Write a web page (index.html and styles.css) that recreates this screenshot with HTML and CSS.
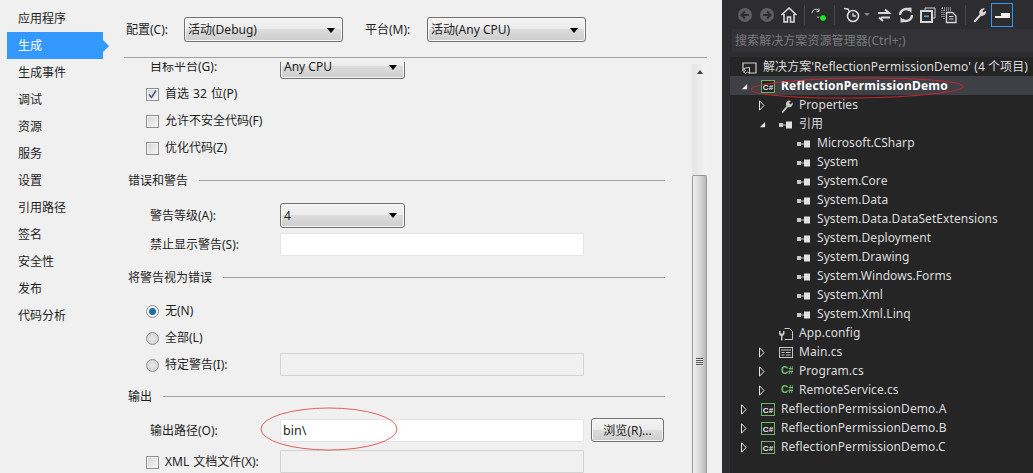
FILE: index.html
```html
<!DOCTYPE html>
<html lang="zh">
<head>
<meta charset="utf-8">
<title>ReflectionPermissionDemo</title>
<link rel="stylesheet" href="styles.css">
</head>
<body>
<svg class="defs" width="0" height="0" aria-hidden="true">
  <symbol id="refs" viewBox="0 0 14 8"><rect x="0" y="2" width="4" height="4" fill="#c8c8c8"/><rect x="4" y="3.500" width="3" height="1" fill="#c8c8c8"/><rect x="7" y="0.500" width="6" height="7" fill="#e0e0e0"/></symbol>
  <symbol id="proj" viewBox="0 0 14 14"><rect x=".5" y=".5" width="13" height="12" fill="#252526" stroke="#6fb36f"/><text x="7" y="9.500" text-anchor="middle" class="cs-white">C#</text></symbol>
  <symbol id="open" viewBox="0 0 6 11"><path d="M.5 .8 L5 5.500 L.5 10.200 Z" fill="none" stroke="#e4e4e4"/></symbol>
  <symbol id="down" viewBox="0 0 8 8"><path d="M7 1 V7 H1 Z" fill="#f0f0f0"/></symbol>
</svg>
<div class="app">
  <nav class="nav">
    <a class="nav-item">应用程序</a>
    <a class="nav-item is-active">生成</a>
    <a class="nav-item">生成事件</a>
    <a class="nav-item">调试</a>
    <a class="nav-item">资源</a>
    <a class="nav-item">服务</a>
    <a class="nav-item">设置</a>
    <a class="nav-item">引用路径</a>
    <a class="nav-item">签名</a>
    <a class="nav-item">安全性</a>
    <a class="nav-item">发布</a>
    <a class="nav-item">代码分析</a>
  </nav>
  <main class="main">
    <header class="config">
      <span class="config-label">配置(C):</span>
      <div class="select select-config">活动(Debug)</div>
      <span class="config-label config-label-2">平台(M):</span>
      <div class="select select-config">活动(Any CPU)</div>
    </header>
    <div class="scroller">
      <div class="form">
        <div class="row row-field row-clip"><span class="label">目标平台(G):</span><div class="select select-short">Any CPU</div></div>
        <div class="row row-check"><span class="check"><svg viewBox="0 0 9 9" width="9" height="9"><path d="M1 4.500 L3.500 7.500 L8 .5" fill="none" stroke="#4a5a9a" stroke-width="1.600"/></svg></span>首选 32 位(P)</div>
        <div class="row row-check"><span class="check"></span>允许不安全代码(F)</div>
        <div class="row row-check"><span class="check"></span>优化代码(Z)</div>

        <div class="section section-a"><span>错误和警告</span></div>
        <div class="row row-field row-32"><span class="label">警告等级(A):</span><div class="select select-short">4</div></div>
        <div class="row row-field row-26"><span class="label">禁止显示警告(S):</span><div class="input"></div></div>

        <div class="section section-b"><span>将警告视为错误</span></div>
        <div class="row row-check"><span class="radio is-on"></span>无(N)</div>
        <div class="row row-check"><span class="radio"></span>全部(L)</div>
        <div class="row row-check"><span class="radio"></span><span class="label-radio">特定警告(I):</span><div class="input input-low"></div></div>

        <div class="section section-c"><span>输出</span></div>
        <div class="row row-field row-32"><span class="label">输出路径(O):</span><div class="input input-on">bin\</div><button class="button">浏览(R)...</button></div>
        <div class="row row-check row-30"><span class="check"></span><span class="label-xml">XML 文档文件(X):</span><div class="input input-low"></div></div>
      </div>
      <div class="scrollbar">
        <span class="scroll-up"></span>
        <div class="thumb"><span class="grip"></span></div>
      </div>
    </div>
    <svg class="ring ring-path" width="140" height="46" viewBox="0 0 140 46"><ellipse cx="70" cy="23" rx="68" ry="21" fill="none" stroke="#e0605e" stroke-width="1"/></svg>
  </main>
  <aside class="explorer">
    <div class="toolbar">
      <svg class="tb" width="18" height="18" viewBox="0 0 18 18"><circle cx="9" cy="9" r="7" fill="#5f5f62"/><path d="M13 9H6M9 5.500 5.500 9 9 12.500" fill="none" stroke="#2d2d30" stroke-width="2"/></svg>
      <svg class="tb" width="18" height="18" viewBox="0 0 18 18"><circle cx="9" cy="9" r="7" fill="#5f5f62"/><path d="M5 9H12M9 5.500 12.500 9 9 12.500" fill="none" stroke="#2d2d30" stroke-width="2"/></svg>
      <svg class="tb" width="18" height="18" viewBox="0 0 18 18"><path d="M1.500 9 9 2l7.500 7M4 8v8h3.500v-5h3v5H14V8" fill="none" stroke="#e0e0e0" stroke-width="1.500"/></svg>
      <span class="tb-sep"></span>
      <svg class="tb" width="18" height="18" viewBox="0 0 18 18"><path d="M2 7a4 4 0 0 1 7-2.500M12 8.500a4 4 0 0 1-5 2.500" fill="none" stroke="#c8c8c8"/><path d="M9 2.500v3H6.500" fill="none" stroke="#c8c8c8"/><circle cx="13" cy="12" r="3.500" fill="#22e822" stroke="#111"/></svg>
      <span class="tb-sep tb-sep-wide"></span>
      <svg class="tb" width="18" height="18" viewBox="0 0 18 18"><path d="M1 2.500l4 .5 1.500 3" fill="none" stroke="#d8d8d8" stroke-width="1.400"/><circle cx="10" cy="10" r="5.500" fill="none" stroke="#d8d8d8" stroke-width="1.600"/><path d="M10 7v3h3" fill="none" stroke="#d8d8d8" stroke-width="1.300"/></svg>
      <span class="tb-caret"></span>
      <svg class="tb tb-after-caret" width="18" height="18" viewBox="0 0 18 18"><path d="M3 7h9M10 3.500l4 3.500h-3M15 11.500H6M8 15l-4-3.500" fill="none" stroke="#d8d8d8" stroke-width="2"/></svg>
      <svg class="tb" width="18" height="18" viewBox="0 0 18 18"><path d="M3 9a6 6 0 0 1 9.500-4.800M15 9a6 6 0 0 1-9.500 4.800" fill="none" stroke="#d8d8d8" stroke-width="2.400"/><path d="M9 2l5.500-.5V7zM9 16l-5.500.5V11z" fill="#d8d8d8"/></svg>
      <svg class="tb" width="18" height="18" viewBox="0 0 18 18"><path d="M6 4V2h10v10h-2" fill="none" stroke="#d8d8d8"/><rect x="2" y="5" width="11" height="11" fill="none" stroke="#d8d8d8" stroke-width="2"/><rect x="5" y="9.500" width="5" height="1.500" fill="#5aa7e0"/></svg>
      <svg class="tb" width="18" height="18" viewBox="0 0 18 18"><path d="M1 2h9M1 2v9M3 4h8M3 4v9" fill="none" stroke="#d8d8d8" stroke-dasharray="1 1"/><path d="M5.500 6.500h6l3.500 3.500v6.500h-9.500z" fill="none" stroke="#d8d8d8" stroke-width="1.300"/><path d="M8 10.500h4.500M8 13h4.500" stroke="#d8d8d8"/></svg>
      <span class="tb-sep"></span>
      <svg class="tb" width="18" height="18" viewBox="0 0 18 18"><path d="M2.500 15 8.500 8.500a4.500 4.500 0 0 1 5.500-6L11.500 5l1 1.500L15 4.500A4.500 4.500 0 0 1 10 10L4 16.500z" fill="#d8d8d8"/></svg>
      <div class="pin"><span class="pin-head"></span></div>
    </div>
    <div class="search">搜索解决方案资源管理器(Ctrl+;)</div>
    <div class="tree">
      <div class="node node-solution">
        <svg class="ico" width="15" height="14" viewBox="0 0 15 14"><path d="M1 10V2h13v10H8" fill="none" stroke="#d0d0d0" stroke-width="1.200"/><path d="M7.500 6.500v6l-2-1.500-2 1.500L1.500 11l2-1.500-2-1.500 2-1z" fill="none" stroke="#d0d0d0"/></svg>
        <span>解决方案'ReflectionPermissionDemo' (4 个项目)</span>
      </div>
      <div class="node is-selected">
        <span class="tw"><svg width="7" height="7"><use href="#down"/></svg></span>
        <svg class="ico ico-proj"><use href="#proj"/></svg><b>ReflectionPermissionDemo</b>
      </div>
      <div class="node lvl1">
        <span class="tw"><svg width="6" height="11"><use href="#open"/></svg></span>
        <svg class="ico ico-lvl" width="14" height="14" viewBox="0 0 14 14"><path d="M2.500 13 7.500 7a3.500 3.500 0 0 1 4.500-5L10 4l1.500 1.500L13.500 3.500A3.500 3.500 0 0 1 9 8L4 14z" fill="#c8c8c8"/></svg><span>Properties</span>
      </div>
      <div class="node lvl1">
        <span class="tw"><svg width="7" height="7"><use href="#down"/></svg></span>
        <svg class="ico ico-lvl" width="14" height="8"><use href="#refs"/></svg><span>引用</span>
      </div>
      <div class="node lvl2"><svg class="ico" width="14" height="8"><use href="#refs"/></svg><span>Microsoft.CSharp</span></div>
      <div class="node lvl2"><svg class="ico" width="14" height="8"><use href="#refs"/></svg><span>System</span></div>
      <div class="node lvl2"><svg class="ico" width="14" height="8"><use href="#refs"/></svg><span>System.Core</span></div>
      <div class="node lvl2"><svg class="ico" width="14" height="8"><use href="#refs"/></svg><span>System.Data</span></div>
      <div class="node lvl2"><svg class="ico" width="14" height="8"><use href="#refs"/></svg><span>System.Data.DataSetExtensions</span></div>
      <div class="node lvl2"><svg class="ico" width="14" height="8"><use href="#refs"/></svg><span>System.Deployment</span></div>
      <div class="node lvl2"><svg class="ico" width="14" height="8"><use href="#refs"/></svg><span>System.Drawing</span></div>
      <div class="node lvl2"><svg class="ico" width="14" height="8"><use href="#refs"/></svg><span>System.Windows.Forms</span></div>
      <div class="node lvl2"><svg class="ico" width="14" height="8"><use href="#refs"/></svg><span>System.Xml</span></div>
      <div class="node lvl2"><svg class="ico" width="14" height="8"><use href="#refs"/></svg><span>System.Xml.Linq</span></div>
      <div class="node lvl1">
        <span class="tw"></span>
        <svg class="ico ico-lvl" width="14" height="14" viewBox="0 0 14 14"><path d="M5.500 1.500h5l3 3v8h-8" fill="none" stroke="#c8c8c8"/><path d="M0 4v2.500a2.500 2.500 0 0 0 2 2.500v4.500h1.500V9a2.500 2.500 0 0 0 2-2.500V4L4 4v2.500H1.500V4z" fill="#c8c8c8"/></svg><span>App.config</span>
      </div>
      <div class="node lvl1">
        <span class="tw"><svg width="6" height="11"><use href="#open"/></svg></span>
        <svg class="ico ico-lvl" width="14" height="12" viewBox="0 0 14 12"><rect x=".5" y=".5" width="13" height="10" fill="none" stroke="#c8c8c8"/><path d="M2 3h10" stroke="#c8c8c8"/><path d="M2.500 5h3v1h-3zM7 5h4.500v1H7zM2.500 7.500h3v1h-3zM7 7.500h4.500v1H7z" fill="#c8c8c8"/></svg><span>Main.cs</span>
      </div>
      <div class="node lvl1">
        <span class="tw"><svg width="6" height="11"><use href="#open"/></svg></span>
        <svg class="ico ico-lvl" width="14" height="14" viewBox="0 0 14 14"><text x="2" y="9" class="cs-green">C#</text></svg><span>Program.cs</span>
      </div>
      <div class="node lvl1">
        <span class="tw"><svg width="6" height="11"><use href="#open"/></svg></span>
        <svg class="ico ico-lvl" width="14" height="14" viewBox="0 0 14 14"><text x="2" y="9" class="cs-green">C#</text></svg><span>RemoteService.cs</span>
      </div>
      <div class="node">
        <span class="tw"><svg width="6" height="11"><use href="#open"/></svg></span>
        <svg class="ico ico-proj"><use href="#proj"/></svg><span>ReflectionPermissionDemo.A</span>
      </div>
      <div class="node">
        <span class="tw"><svg width="6" height="11"><use href="#open"/></svg></span>
        <svg class="ico ico-proj"><use href="#proj"/></svg><span>ReflectionPermissionDemo.B</span>
      </div>
      <div class="node">
        <span class="tw"><svg width="6" height="11"><use href="#open"/></svg></span>
        <svg class="ico ico-proj"><use href="#proj"/></svg><span>ReflectionPermissionDemo.C</span>
      </div>
    </div>
    <svg class="ring ring-project" width="218" height="26" viewBox="0 0 218 26"><ellipse cx="109" cy="13" rx="106" ry="10" fill="none" stroke="#c8262a" stroke-width="1" transform="rotate(-.8 109 13)"/></svg>
  </aside>
</div>
</body>
</html>
```
FILE: styles.css
```css
* { box-sizing: border-box; }
html, body { margin: 0; height: 100%; overflow: hidden; }
body {
  font: 12px/1.2 "Noto Sans", "Noto Sans CJK SC", sans-serif;
  color: #1e1e1e;
  background: #f0f0f0;
}
.defs { position: absolute; }
.app { display: flex; height: 473px; }

/* left navigation */
.nav {
  width: 112px;
  flex: none;
  padding: 5px 9px 0 7px;
  display: flex;
  flex-direction: column;
}
.nav-item {
  height: 27px;
  padding: 2px 0 0 11px;
  display: flex;
  align-items: center;
  position: relative;
}
.nav-item.is-active { background: #3399ff; color: #fff; }
.nav-item.is-active::after {
  content: "";
  position: absolute;
  left: 100%;
  top: 8px;
  border: 6px solid transparent;
  border-left-color: #3399ff;
}

/* properties page */
.main {
  width: 610px;
  flex: none;
  display: flex;
  flex-direction: column;
  padding-left: 2px;
  position: relative;
}
.config {
  height: 58px;
  width: 583px;
  flex: none;
  margin-left: 10px;
  padding: 17px 0 15px 2px;
  display: flex;
  align-items: center;
  border-bottom: 1px solid #a0a0a0;
}
.config-label { width: 58px; flex: none; padding-top: 2px; }
.config-label-2 { width: 62px; margin-left: 22px; }

.select {
  border: 1px solid #707070;
  border-radius: 3px;
  padding: 2px 0 0 3px;
  display: flex;
  align-items: center;
  position: relative;
  background: linear-gradient(#f3f3f3 0%, #ececec 48%, #dcdcdc 50%, #cdcdcd 100%);
  box-shadow: inset 0 0 0 1px #f8f8f8;
}
.select::after {
  content: "";
  position: absolute;
  right: 7px;
  top: 50%;
  margin-top: -2px;
  border: 4px solid transparent;
  border-bottom-width: 0;
  border-top: 5px solid #000;
}
.select-config { width: 159px; height: 25px; }
.select-short { width: 125px; height: 25px; }

.scroller {
  flex: 1;
  min-height: 0;
  width: 583px;
  margin: 4px 0 0 10px;
  display: flex;
  overflow: hidden;
}
.form { flex: 1; margin-top: -9px; padding-left: 4px; min-width: 0; }

.row { display: flex; align-items: center; height: 27px; }
.row-field { padding-left: 22px; }
.row-check { padding: 2px 0 0 18px; word-spacing: 1px; }
.row-32 { height: 32px; }
.row-26 { height: 26px; }
.row-30 { height: 30px; }
.label { width: 130px; flex: none; padding-top: 2px; }
.label-radio { width: 115px; flex: none; }
.label-xml { width: 115px; flex: none; }

.check {
  width: 13px;
  height: 13px;
  flex: none;
  margin-right: 6px;
  border: 1px solid #8e8f8f;
  display: flex;
  align-items: center;
  justify-content: center;
  background: linear-gradient(135deg, #d5d5d5, #f6f6f6);
  box-shadow: inset 0 0 0 1px #f4f4f4;
}
.radio {
  width: 13px;
  height: 13px;
  flex: none;
  margin-right: 6px;
  border: 1px solid #8e8f8f;
  border-radius: 50%;
  background: radial-gradient(circle, #e8e8e8, #cfcfcf);
}
.radio.is-on { background: radial-gradient(circle, #1c6ea8 0 3px, #f0f0f0 4px); }

.section {
  display: flex;
  align-items: center;
  gap: 11px;
  padding-right: 27px;
}
.section span { padding-top: 2px; }
.section::after {
  content: "";
  flex: 1;
  height: 1px;
  background: #a0a0a0;
}
.section-a { height: 38px; }
.section-b { height: 40px; }
.section-c { height: 36px; }

.input {
  width: 304px;
  height: 23px;
  flex: none;
  border: 1px solid #d3d3d3;
  border-radius: 1px;
  background: #f0f0f0;
  padding: 1px 0 0 2px;
  display: flex;
  align-items: center;
  font-size: 12.500px;
}
.input-low { margin-top: -2px; }
.row-26 .input, .input-on { background: #fff; border-color: #e2e3e4; }
.button {
  width: 73px;
  height: 24px;
  flex: none;
  margin-left: 7px;
  padding: 2px 0 0;
  border: 1px solid #707070;
  border-radius: 3px;
  font: inherit;
  color: inherit;
  background: linear-gradient(#f3f3f3 0%, #ececec 48%, #dcdcdc 50%, #cdcdcd 100%);
  box-shadow: inset 0 0 0 1px #f8f8f8;
}

.scrollbar {
  width: 15px;
  flex: none;
  margin-top: 2px;
  display: flex;
  flex-direction: column;
  background: linear-gradient(90deg, #e4e4e4, #f4f4f4);
}
.scroll-up {
  align-self: center;
  margin-top: 6px;
  border: 3.500px solid transparent;
  border-top-width: 0;
  border-bottom: 4px solid #404040;
}
.thumb {
  flex: 1;
  margin-top: 101px;
  border: 1px solid #979797;
  border-bottom: 0;
  border-radius: 2px 2px 0 0;
  background: linear-gradient(90deg, #f1f1f1, #d5d5d5 55%, #b8b8b8);
  padding-top: 182px;
  display: flex;
  justify-content: center;
}
.grip {
  width: 7px;
  height: 8px;
  background: repeating-linear-gradient(#555 0 1px, #e8e8e8 1px 2px);
}

.ring { position: absolute; pointer-events: none; }
.ring-path { left: 147px; top: 406px; }
.ring-project { left: 26px; top: 75px; }

/* solution explorer */
.explorer {
  flex: 1;
  min-width: 0;
  position: relative;
  background: #2d2d30;
  color: #dcdcdc;
  display: flex;
  flex-direction: column;
  padding-left: 1px;
}
.toolbar {
  height: 29px;
  flex: none;
  display: flex;
  align-items: center;
  padding: 0 0 0 13px;
  gap: 4px;
}
.tb { flex: none; }
.tb-after-caret { margin-left: 1px; }
.tb-sep {
  width: 1px;
  height: 20px;
  flex: none;
  margin: 0 1px 0 2px;
  background: #4a4a4d;
}
.tb-sep-wide { margin-right: 4px; }
.tb-caret {
  flex: none;
  margin: 0 0 0 -1px;
  border: 3px solid transparent;
  border-top: 3px solid #888;
  border-bottom-width: 0;
}
.pin {
  width: 22px;
  height: 24px;
  flex: none;
  margin-left: -2px;
  border: 1px solid #3399ff;
  position: relative;
}
.pin-head {
  position: absolute;
  left: 3px;
  right: 2px;
  top: 12px;
  height: 2px;
  background: #f0f0f0;
}
.pin-head::after {
  content: "";
  position: absolute;
  right: 0;
  bottom: 2px;
  width: 9px;
  height: 3px;
  background: #f0f0f0;
}
.search {
  height: 23px;
  flex: none;
  margin-left: 9px;
  padding: 2px 0 0 3px;
  display: flex;
  align-items: center;
  background: #333337;
  color: #7a7a7e;
  letter-spacing: .07px;
}
.tree {
  flex: 1;
  min-height: 0;
  margin: 5px 0 0 7px;
  background: #252526;
  letter-spacing: .07px;
}
.node {
  height: 19px;
  display: flex;
  align-items: center;
  padding: 2px 0 0 7px;
  white-space: nowrap;
}
.node-solution { padding-left: 12px; }
.node.is-selected { background: #3f3f46; color: #fff; }
.node b { font-weight: 700; letter-spacing: .2px; }
.lvl1 { padding-left: 25px; }
.lvl2 { padding-left: 67px; }
.tw {
  width: 24px;
  flex: none;
  padding-left: 4px;
  display: flex;
  align-items: center;
}
.ico { flex: none; margin-right: 6px; }
.ico-proj { width: 14px; height: 14px; }
.ico-lvl { margin-left: 0; }
.cs-white { font: 700 8px "Liberation Sans", sans-serif; fill: #e8e8e8; }
.cs-green { font: 700 10px "Liberation Sans", sans-serif; fill: #6fbf6f; }
```
